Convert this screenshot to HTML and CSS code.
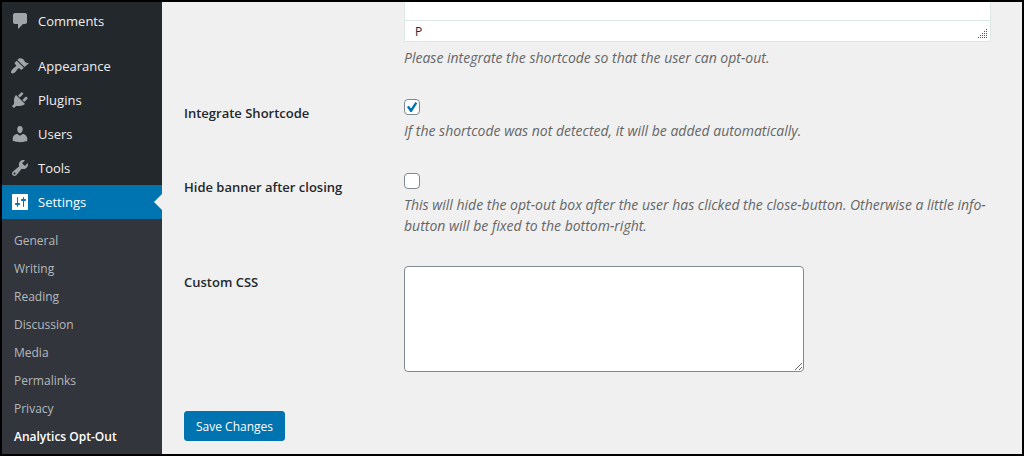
FILE: index.html
```html
<!DOCTYPE html>
<html lang="en">
<head>
    <meta charset="UTF-8">
    <meta name="viewport" content="width=device-width, initial-scale=1.0">
    <title>Analytics Opt-Out Settings</title>
    <link rel="stylesheet" href="styles.css">
</head>
<body>
    <div class="admin">
        <nav class="sidebar">
            <ul class="menu">
                <li class="menu-gap">
                    <a href="#" class="menu-link">
                        <svg class="icon" viewBox="0 0 20 20"><path d="M5 2h10c1.100 0 2 .9 2 2v7c0 1.100-.9 2-2 2h-2l-5 5v-5H5c-1.100 0-2-.9-2-2V4c0-1.100.9-2 2-2z"/></svg>
                        Comments
                    </a>
                </li>
                <li>
                    <a href="#" class="menu-link">
                        <svg class="icon" viewBox="0 0 20 20"><path d="M14.480 11.060L7.410 3.990l1.500-1.500c.5-.56 2.300-.47 3.510.32 1.210.8 1.430 1.280 2 2.100 1.180 1.640 2.450 2.220 4.450 2.110-.35.700-.91 1.300-1.400 1.600l-2.990 2.440zm-.71.71L6.700 4.700 4.930 6.470c-.39.390-.39 1.020 0 1.410l1.060 1.060c.39.390.39 1.030 0 1.420-.6.600-1.430 1.110-2.210 1.690-.35.260-.7.530-1.010.84C1.430 14.230.4 16.080 1.400 17.070c.99 1 2.840-.03 4.180-1.360.31-.31.580-.66.850-1.020.57-.78 1.080-1.610 1.690-2.210.39-.39 1.020-.39 1.410 0l1.060 1.060c.39.390 1.020.39 1.410 0z"/></svg>
                        Appearance
                    </a>
                </li>
                <li>
                    <a href="#" class="menu-link">
                        <svg class="icon" viewBox="0 0 20 20"><path d="M13.110 4.360L9.870 7.600 8 5.730l3.240-3.240c.35-.34 1.050-.2 1.560.32.520.51.660 1.210.31 1.550zm-8 1.770l.91-1.120 9.010 9.010-1.190.84c-.71.710-2.630 1.160-3.820 1.160H6.140L4.900 17.260c-.59.590-1.540.59-2.120 0-.59-.58-.59-1.530 0-2.120l1.240-1.240v-3.880c0-1.130.4-3.190 1.090-3.890zm7.260 3.970l3.240-3.240c.34-.35 1.040-.21 1.550.31.520.51.660 1.210.31 1.550l-3.240 3.250z"/></svg>
                        Plugins
                    </a>
                </li>
                <li>
                    <a href="#" class="menu-link">
                        <svg class="icon" viewBox="0 0 20 20"><path d="M10 9.250c-2.270 0-2.730-3.440-2.730-3.440C7 4.020 7.820 2 9.970 2c2.160 0 2.980 2.020 2.710 3.810 0 0-.41 3.440-2.680 3.440zm0 2.570L12.720 10c2.390 0 4.520 2.330 4.520 4.530v2.490s-3.650 1.130-7.240 1.130c-3.650 0-7.240-1.130-7.240-1.130v-2.490c0-2.250 1.940-4.480 4.470-4.480z"/></svg>
                        Users
                    </a>
                </li>
                <li>
                    <a href="#" class="menu-link">
                        <svg class="icon" viewBox="0 0 20 20"><path d="M16.680 9.770c-1.340 1.340-3.300 1.670-4.950.99l-5.410 6.520c-.99.990-2.590.99-3.580 0s-.99-2.590 0-3.570l6.520-5.420c-.68-1.650-.35-3.610.99-4.950 1.280-1.280 3.120-1.620 4.720-1.060l-2.890 2.890 2.820 2.820 2.860-2.870c.53 1.580.18 3.390-1.080 4.650zM3.810 16.210c.4.390 1.040.39 1.430 0 .4-.4.400-1.040 0-1.430-.39-.4-1.030-.4-1.430 0-.39.390-.39 1.030 0 1.430z"/></svg>
                        Tools
                    </a>
                </li>
                <li>
                    <a href="#" class="menu-link current">
                        <svg class="icon" viewBox="0 0 20 20"><path fill-rule="evenodd" d="M18 17V3c0-.55-.45-1-1-1H3c-.55 0-1 .45-1 1v14c0 .55.450 1 1 1h14c.55 0 1-.45 1-1zM8 11h1c.550 0 1 .450 1 1s-.450 1-1 1H8v1.500c0 .280-.220.500-.500.500s-.500-.220-.500-.500V13H6c-.550 0-1-.450-1-1s.450-1 1-1h1V5.500c0-.280.220-.500.500-.500s.500.220.500.500V11zm5-2h-1c-.550 0-1-.450-1-1s.450-1 1-1h1V5.500c0-.280.220-.500.500-.500s.500.220.500.500V7h1c.550 0 1 .450 1 1s-.450 1-1 1h-1v5.500c0 .280-.220.500-.500.500s-.500-.220-.500-.500V9z"/></svg>
                        Settings
                    </a>
                    <ul class="submenu">
                        <li><a href="#">General</a></li>
                        <li><a href="#">Writing</a></li>
                        <li><a href="#">Reading</a></li>
                        <li><a href="#">Discussion</a></li>
                        <li><a href="#">Media</a></li>
                        <li><a href="#">Permalinks</a></li>
                        <li><a href="#">Privacy</a></li>
                        <li><a href="#" class="active">Analytics Opt-Out</a></li>
                    </ul>
                </li>
            </ul>
        </nav>

        <main class="content">
            <form>
                <div class="editor-row">
                    <div class="editor">
                        <div class="editor-body"></div>
                        <div class="statusbar">
                            <span>P</span>
                            <svg class="grip" viewBox="0 0 10 10" shape-rendering="crispEdges"><path d="M8 0h1v1h-1zM6 2h1v1h-1zM8 2h1v1h-1zM4 4h1v1h-1zM6 4h1v1h-1zM8 4h1v1h-1zM2 6h1v1h-1zM4 6h1v1h-1zM6 6h1v1h-1zM8 6h1v1h-1zM0 8h1v1h-1zM2 8h1v1h-1zM4 8h1v1h-1zM6 8h1v1h-1zM8 8h1v1h-1z"/></svg>
                        </div>
                    </div>
                    <p class="description">Please integrate the shortcode so that the user can opt-out.</p>
                </div>

                <div class="row">
                    <label for="shortcode">Integrate Shortcode</label>
                    <div class="field">
                        <input type="checkbox" id="shortcode" checked>
                        <p class="description">If the shortcode was not detected, it will be added automatically.</p>
                    </div>
                </div>

                <div class="row">
                    <label for="hide">Hide banner after closing</label>
                    <div class="field">
                        <input type="checkbox" id="hide">
                        <p class="description">This will hide the opt-out box after the user has clicked the close-button. Otherwise a little info-button will be fixed to the bottom-right.</p>
                    </div>
                </div>

                <div class="row">
                    <label for="css">Custom CSS</label>
                    <div class="field">
                        <textarea id="css"></textarea>
                    </div>
                </div>

                <button type="submit">Save Changes</button>
            </form>
        </main>
    </div>
</body>
</html>
```
FILE: styles.css
```css
* {
    box-sizing: border-box;
}

body {
    margin: 0;
    background: #f0f0f0;
    color: #23282d;
    font-family: "Open Sans", "Noto Sans", sans-serif;
    font-size: 13px;
}

.admin {
    display: flex;
    min-height: 100vh;
    border: 2px solid #000;
}

/* sidebar */
.sidebar {
    flex: 0 0 160px;
    background: #23282c;
}

.menu, .submenu {
    list-style: none;
    margin: 0;
    padding: 0;
}

.menu {
    padding-top: 2px;
}

.menu-gap {
    margin-bottom: 11px;
}

.menu-link {
    display: flex;
    align-items: center;
    gap: 8px;
    height: 34px;
    padding-left: 8px;
    color: #eee;
    text-decoration: none;
}

.icon {
    width: 20px;
    height: 20px;
    fill: #a0a5aa;
}

.current {
    position: relative;
    background: #0073b1;
    color: #fff;
}

.current .icon {
    fill: #fff;
}

.current::after {
    content: "";
    position: absolute;
    right: 0;
    top: 9px;
    border: 8px solid transparent;
    border-left-width: 0;
    border-right-color: #f0f0f0;
}

.submenu {
    padding: 8px 0 3px;
    background: #32353c;
}

.submenu a {
    display: block;
    padding-left: 12px;
    color: #b4b9be;
    font-size: 12px;
    line-height: 28px;
    text-decoration: none;
}

.submenu .active {
    color: #fff;
    font-weight: 600;
}

/* settings form */
.content {
    flex: 1;
    padding: 0 31px 13px 22px;
}

.editor-row {
    height: 82px;
    padding-left: 220px;
}

.editor {
    background: #fff;
    border: 1px solid #dce8e6;
    border-top: 0;
}

.editor-body {
    height: 18px;
}

.statusbar {
    display: flex;
    justify-content: space-between;
    align-items: center;
    height: 21px;
    padding: 0 2px 0 10px;
    border-top: 1px solid #dce8e6;
    font-size: 12px;
}

.grip {
    width: 10px;
    height: 10px;
    margin-top: 6px;
    fill: #555;
}

.description {
    margin: 5px 0 0;
    color: #666;
    font-size: 14px;
    font-style: italic;
    line-height: 21px;
}

.row {
    display: grid;
    grid-template-columns: 220px 1fr;
}

.row label {
    padding-top: 20px;
    font-weight: 600;
    line-height: 18px;
}

.field {
    padding: 15px 0 17px;
}

input[type="checkbox"] {
    display: grid;
    place-content: center;
    appearance: none;
    width: 16px;
    height: 16px;
    margin: 0;
    border: 1px solid #7e8993;
    border-radius: 4px;
    background: #fff;
}

input[type="checkbox"]:checked::before {
    content: "";
    width: 12px;
    height: 12px;
    background: #0073b1;
    clip-path: polygon(8% 50%, 24% 40%, 42% 62%, 78% 8%, 94% 18%, 48% 92%, 36% 92%);
}

textarea {
    display: block;
    width: 400px;
    max-width: 100%;
    height: 106px;
    margin-top: -2px;
    border: 1px solid #7e8993;
    border-radius: 4px;
    background: #fff;
}

button {
    height: 30px;
    margin-top: 22px;
    padding: 0 11px;
    border: 1px solid #0073b1;
    border-radius: 3px;
    background: #0073b1;
    color: #fff;
    font-family: inherit;
    font-size: 12px;
    cursor: pointer;
}
```
